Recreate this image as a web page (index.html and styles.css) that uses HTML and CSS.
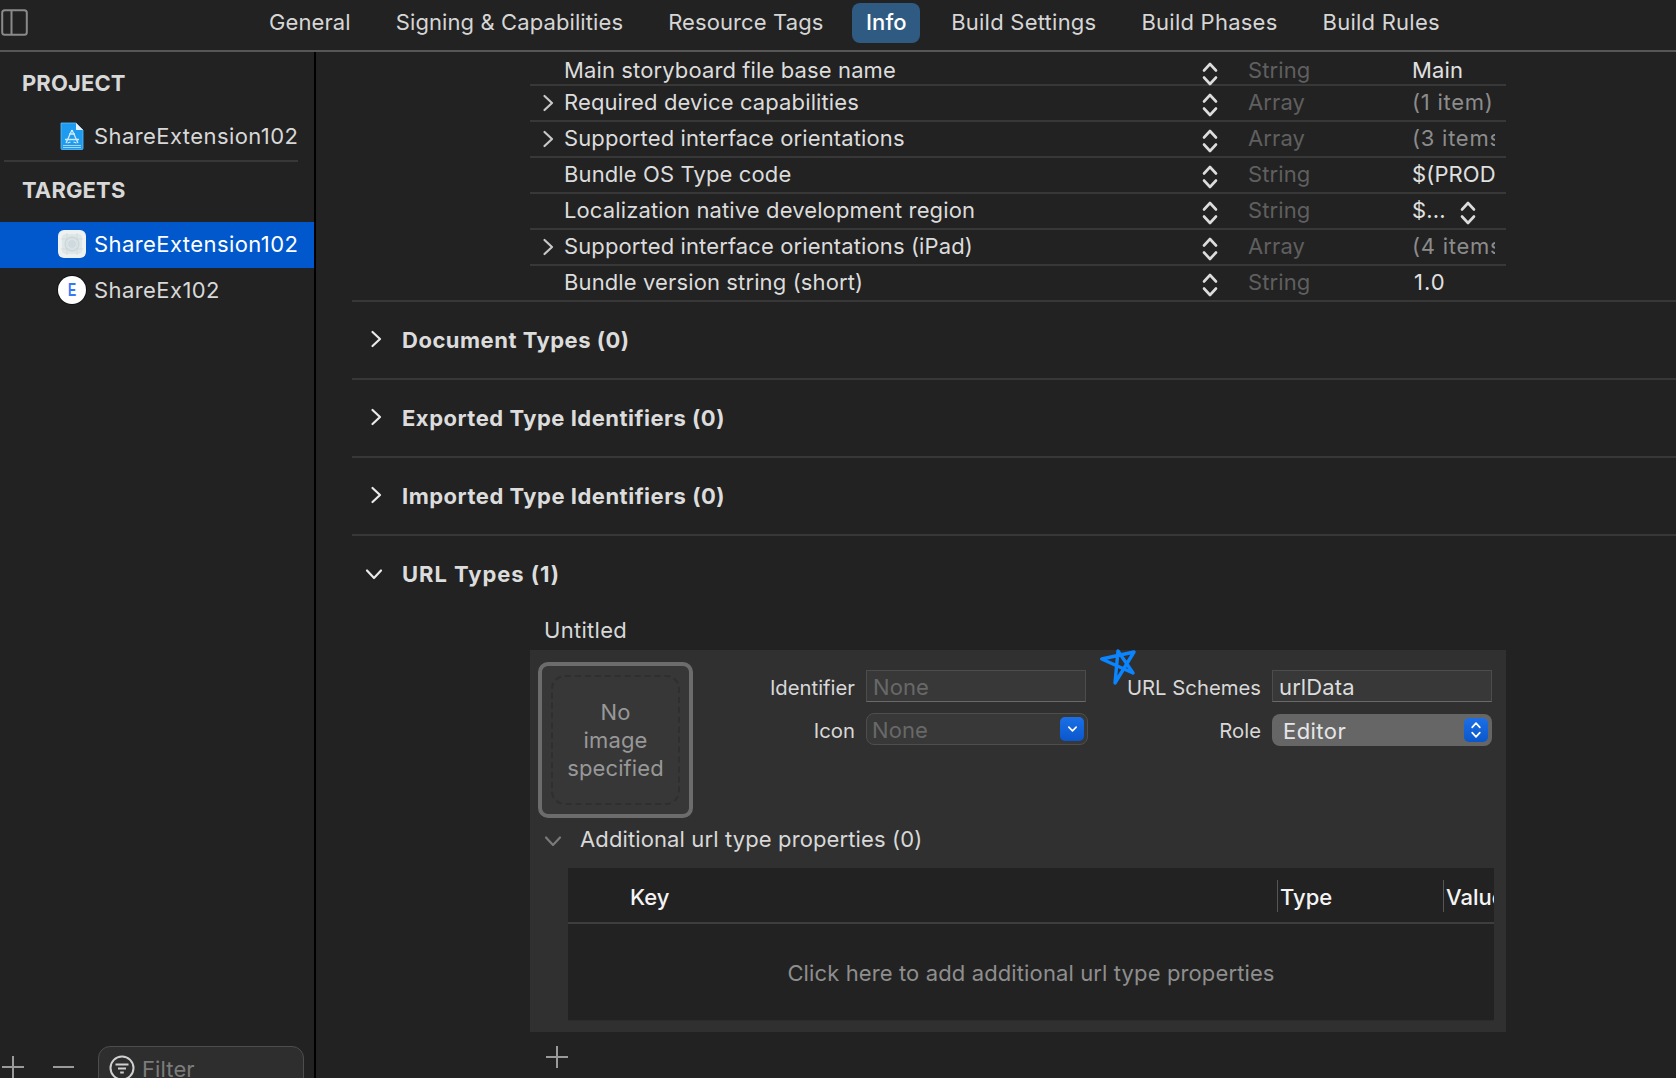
FILE: index.html
```html
<!DOCTYPE html>
<html lang="en">
<head>
<meta charset="utf-8">
<title>ShareExtension102 Info</title>
<link rel="stylesheet" href="styles.css">
</head>
<body>
<svg class="defs" width="0" height="0">
  <symbol id="stepper" viewBox="0 0 16 26"><path d="M2 9.500 8 3l6 6.500M2 16.500 8 23l6-6.500" fill="none" stroke="currentColor" stroke-width="2.600" stroke-linecap="round" stroke-linejoin="round"/></symbol>
  <symbol id="chev-r" viewBox="0 0 12 18"><path d="M2.500 2 10 9l-7.500 7" fill="none" stroke="currentColor" stroke-width="2.200" stroke-linecap="round" stroke-linejoin="round"/></symbol>
  <symbol id="chev-d" viewBox="0 0 18 12"><path d="M2 2.500 9 10l7-7.500" fill="none" stroke="currentColor" stroke-width="2.200" stroke-linecap="round" stroke-linejoin="round"/></symbol>
  <symbol id="plus" viewBox="0 0 22 22"><path d="M11 0v22M0 11h22" stroke="currentColor" stroke-width="2"/></symbol>
</svg>
<div class="app">
  <header class="topbar">
    <svg class="panel-toggle" viewBox="0 0 27 27"><rect x="1.200" y="1.200" width="24.600" height="24.600" rx="2.500" fill="none" stroke="#8a8a8a" stroke-width="2"/><path d="M10.500 1v25" stroke="#8a8a8a" stroke-width="2"/></svg>
    <nav class="tabs">
      <span class="tab">General</span>
      <span class="tab">Signing &amp; Capabilities</span>
      <span class="tab">Resource Tags</span>
      <span class="tab tab-active">Info</span>
      <span class="tab tab-wide">Build Settings</span>
      <span class="tab tab-wide">Build Phases</span>
      <span class="tab tab-wide">Build Rules</span>
    </nav>
  </header>
  <div class="body">
    <aside class="sidebar">
      <div class="side-scroll">
        <h2 class="side-head">PROJECT</h2>
        <div class="side-item side-project">
          <svg class="side-icon" viewBox="0 0 24 28"><path d="M1 1h15l7 7v18.500a1 1 0 0 1-1 1H2a1 1 0 0 1-1-1z" fill="#1d9bf0" stroke="#5cc0ff" stroke-width=".8"/><path d="M16 1l7 7h-7z" fill="#e6f3fc"/><path d="M3 23.500h18M3 25.500h18" stroke="#bfe3fa" stroke-width=".8"/><path d="M12 8l-6 13M12 8l6 13M5 17.500h14M9 12h6M7.500 21l3-1M16.500 21l-3-1" stroke="#cfeafc" stroke-width="1.300" fill="none"/></svg>
          <span>ShareExtension102</span>
        </div>
        <h2 class="side-head side-targets">TARGETS</h2>
        <div class="side-item side-selected">
          <svg class="side-icon" viewBox="0 0 28 28"><rect width="28" height="28" rx="6" fill="#eef1f2"/><rect x="4" y="4" width="20" height="20" rx="4" fill="#dfe6e8"/><circle cx="14" cy="14" r="7" fill="none" stroke="#c5d1d5"/><circle cx="14" cy="14" r="4" fill="#cfdade"/><path d="M9 3v22M19 3v22M3 9h22M3 19h22" stroke="#cbd5d9" stroke-width=".7"/></svg>
          <span>ShareExtension102</span>
        </div>
        <div class="side-item side-ext">
          <span class="ext-badge"><span class="ext-letter">E</span></span>
          <span>ShareEx102</span>
        </div>
      </div>
      <div class="side-foot">
        <svg class="foot-plus"><use href="#plus"/></svg>
        <span class="foot-minus"></span>
        <div class="filter">
          <svg class="filter-icon" viewBox="0 0 26 26"><circle cx="13" cy="13" r="11.500" fill="none" stroke="#d0d0d0" stroke-width="2"/><path d="M6.500 9.500h13M9 13.500h8M11.200 17.500h3.600" stroke="#d0d0d0" stroke-width="2"/></svg>
          <span>Filter</span>
        </div>
      </div>
    </aside>
    <main class="main">
      <div class="plist">
        <div class="row row-first"><span></span><span class="key">Main storyboard file base name</span><svg class="step"><use href="#stepper"/></svg><span class="type">String</span><span class="val">Main</span></div>
        <div class="row"><svg class="row-chev"><use href="#chev-r"/></svg><span class="key">Required device capabilities</span><svg class="step"><use href="#stepper"/></svg><span class="type">Array</span><span class="val val-dim">(1 item)</span></div>
        <div class="row"><svg class="row-chev"><use href="#chev-r"/></svg><span class="key">Supported interface orientations</span><svg class="step"><use href="#stepper"/></svg><span class="type">Array</span><span class="val val-dim">(3 items)</span></div>
        <div class="row"><span></span><span class="key">Bundle OS Type code</span><svg class="step"><use href="#stepper"/></svg><span class="type">String</span><span class="val">$(PRODUCT_BUNDLE_PACKAGE_TYPE)</span></div>
        <div class="row"><span></span><span class="key">Localization native development region</span><svg class="step"><use href="#stepper"/></svg><span class="type">String</span><span class="val val-pop"><span>$...</span><svg class="step"><use href="#stepper"/></svg></span></div>
        <div class="row"><svg class="row-chev"><use href="#chev-r"/></svg><span class="key">Supported interface orientations (iPad)</span><svg class="step"><use href="#stepper"/></svg><span class="type">Array</span><span class="val val-dim">(4 items)</span></div>
        <div class="row row-last"><span></span><span class="key">Bundle version string (short)</span><svg class="step"><use href="#stepper"/></svg><span class="type">String</span><span class="val val-num">1.0</span></div>
      </div>
      <section class="sec"><svg class="sec-chev"><use href="#chev-r"/></svg><h3>Document Types (0)</h3></section>
      <section class="sec"><svg class="sec-chev"><use href="#chev-r"/></svg><h3>Exported Type Identifiers (0)</h3></section>
      <section class="sec"><svg class="sec-chev"><use href="#chev-r"/></svg><h3>Imported Type Identifiers (0)</h3></section>
      <section class="sec sec-open"><svg class="sec-chev-d"><use href="#chev-d"/></svg><h3>URL Types (1)</h3></section>
      <div class="url">
        <div class="url-title">Untitled</div>
        <div class="url-panel">
          <svg class="star" viewBox="0 0 36 37"><path d="M.7 9 32 23 17 1 14 33 33 2Z" fill="none" stroke="#0a84ff" stroke-width="3.400" stroke-linejoin="round" stroke-linecap="round"/></svg>
          <div class="url-top">
            <div class="well"><div class="well-inner">No<br>image<br>specified</div></div>
            <div class="form">
              <label class="lab">Identifier</label>
              <div class="field field-empty">None</div>
              <label class="lab">URL Schemes</label>
              <div class="field">urlData</div>
              <label class="lab">Icon</label>
              <div class="combo"><span>None</span><span class="blue-btn blue-small"><svg viewBox="0 0 12 8"><path d="M2 2l4 4 4-4" fill="none" stroke="#fff" stroke-width="1.800" stroke-linecap="round" stroke-linejoin="round"/></svg></span></div>
              <label class="lab">Role</label>
              <div class="popup"><span>Editor</span><span class="blue-btn"><svg viewBox="0 0 16 26"><path d="M3 9.500 8 4l5 5.500M3 16.500 8 22l5-5.500" fill="none" stroke="#fff" stroke-width="2.200" stroke-linecap="round" stroke-linejoin="round"/></svg></span></div>
            </div>
          </div>
          <div class="addl">
            <svg class="addl-chev"><use href="#chev-d"/></svg>
            <span>Additional url type properties (0)</span>
          </div>
          <div class="tbl">
            <div class="tbl-head">
              <div class="th th-key">Key</div>
              <div class="th th-sep">Type</div>
              <div class="th th-sep">Value</div>
            </div>
            <div class="tbl-body">Click here to add additional url type properties</div>
          </div>
        </div>
        <svg class="url-plus"><use href="#plus"/></svg>
      </div>
    </main>
  </div>
</div>
</body>
</html>
```
FILE: styles.css
```css
* { box-sizing: border-box; }
html, body { margin: 0; height: 100%; overflow: hidden; background: #222222; }
body { font-family: Inter, "Noto Sans", "Liberation Sans", sans-serif; font-size: 22px; letter-spacing: .12px; color: #dcdcdc; }
.defs { position: absolute; }
.app { height: 1078px; display: flex; flex-direction: column; overflow: hidden; }

.topbar { height: 52px; flex: none; display: flex; align-items: flex-start; border-bottom: 2px solid #565656; }
.panel-toggle { width: 27px; height: 27px; margin: 9px 0 0 1px; flex: none; }
.tabs { display: flex; gap: 17px; margin: 3px 0 0 227px; }
.tab { height: 40px; padding: 0 14px; line-height: 38px; border-radius: 8px; color: #d6d6d6; white-space: nowrap; letter-spacing: .1px; }
.tab-wide { letter-spacing: .24px; }
.tab-active { background: #2f5b82; color: #fff; font-weight: 500; padding: 0 13.500px; margin-left: -2px; }

.body { flex: 1; display: flex; min-height: 0; }
.sidebar { width: 316px; flex: none; display: flex; flex-direction: column; border-right: 2px solid #000; }
.side-scroll { flex: 1; }
.side-head { margin: 0; padding: 18px 0 0 22px; height: 60px; font-size: 22px; line-height: 26px; font-weight: 700; color: #d8d8d8; }
.side-item { display: flex; align-items: center; gap: 8px; padding-left: 58px; color: #d8d8d8; white-space: nowrap; letter-spacing: .42px; }
.side-project { height: 50px; padding-bottom: 3px; position: relative; }
.side-project::after { content: ""; position: absolute; left: 4px; width: 294px; bottom: 0; height: 2px; background: #383838; }
.side-targets { padding-top: 15px; }
.side-selected { height: 46px; padding-bottom: 2px; background: #0058cc; color: #fff; }
.side-ext { height: 46px; padding-bottom: 2px; }
.side-icon { width: 28px; height: 28px; flex: none; }
.ext-badge { width: 28px; height: 28px; flex: none; border-radius: 50%; background: #fff; color: #3478f6; font: 700 18px/28px "Liberation Sans", sans-serif; text-align: center; box-shadow: 0 0 0 1px #111; letter-spacing: 0; }
.ext-letter { display: inline-block; transform: scaleX(.68); }

.side-foot { height: 32px; flex: none; display: flex; align-items: flex-start; position: relative; }
.foot-plus { width: 22px; height: 22px; margin: 10px 0 0 2px; color: #9a9a9a; }
.foot-minus { width: 21px; height: 2px; margin: 20px 0 0 29px; background: #9a9a9a; }
.filter { width: 206px; height: 50px; margin-left: 24px; flex: none; border: 1px solid #4d4d4d; border-radius: 12px; background: #2e2e2e; display: flex; align-items: flex-start; gap: 7px; padding: 8px 0 0 10px; color: #7c7c7c; }
.filter-icon { width: 26px; height: 26px; flex: none; }
.filter span { line-height: 26px; margin-top: 1px; }

.main { flex: 1; min-width: 0; overflow: hidden; }
.plist { margin-left: 214px; width: 976px; }
.row { display: grid; grid-template-columns: 34px 639px 45px 164px 83px; align-items: center; height: 36px; padding-bottom: 2px; border-bottom: 2px solid #383838; white-space: nowrap; }
.row-first { height: 34px; padding-bottom: 6px; }
.row-last { border-bottom: 0; padding-bottom: 4px; }
.row-chev { width: 12px; height: 18px; margin: 2px 0 0 12px; color: #c8c8c8; }
.key { color: #dcdcdc; }
.step { width: 16px; height: 26px; margin: 6px 0 0 -1px; color: #dcdcdc; }
.row-first .step { margin-top: 9px; }
.type { color: #5f5f5f; }
.val { overflow: hidden; color: #e0e0e0; }
.val-dim { color: #8c8c8c; letter-spacing: .75px; }
.val-num { padding-left: 2px; letter-spacing: 1px; }
.val-pop { display: flex; align-items: center; overflow: visible; }
.val-pop .step { margin: 6px 0 0 14px; }

.sec { margin-left: 36px; height: 78px; padding-left: 20px; display: flex; align-items: center; border-bottom: 2px solid #383838; }
.plist + .sec { box-shadow: 0 -2px 0 #383838; }
.sec h3 { margin: 0 0 0 20px; font-size: 22px; font-weight: 700; color: #dcdcdc; letter-spacing: .5px; }
.sec-chev { width: 12px; height: 18px; margin: -2px 0 0 -2px; flex: none; color: #eaeaea; }
.sec-chev-d { width: 18px; height: 12px; flex: none; color: #eaeaea; margin: 0 -1px 0 -7px; }
.sec-open { height: 76px; border-bottom: 0; }
.sec-open h3 { letter-spacing: .95px; }

.url { margin-left: 214px; width: 976px; }
.url-title { height: 38px; padding-left: 14px; line-height: 36px; color: #d8d8d8; letter-spacing: .3px; }
.url-panel { height: 382px; background: #303030; position: relative; display: flex; flex-direction: column; }
.star { position: absolute; left: 571px; top: 0; width: 36px; height: 37px; overflow: visible; }
.url-top { height: 167px; display: flex; align-items: flex-start; padding: 12px 0 0 8px; }
.well { width: 155px; height: 156px; flex: none; border: 4px solid #6c6c6c; border-radius: 10px; background: #373737; padding: 9px; }
.well-inner { height: 100%; border: 2px dashed #2f2f2f; border-radius: 14px; display: flex; align-items: center; justify-content: center; text-align: center; line-height: 28px; color: #989898; }
.form { display: grid; grid-template-columns: 173px 222px 184px 222px; grid-auto-rows: 32px; row-gap: 11px; margin-top: 8px; }
.lab { text-align: right; font-size: 20.300px; letter-spacing: 0; line-height: 35px; padding-right: 11px; color: #d8d8d8; white-space: nowrap; }
.field { width: 220px; height: 32px; background: #383838; border: 1px solid #4c4c4c; border-bottom-color: #6a6a6a; padding-left: 6px; line-height: 32px; color: #dcdcdc; }
.field-empty { color: #686868; }
.combo { width: 222px; height: 32px; background: #383838; border: 1px solid #4e4e4e; border-radius: 8px; padding: 0 3px 0 5px; display: flex; align-items: center; justify-content: space-between; color: #686868; }
.combo > span:first-child { margin-top: 2px; }
.popup { width: 220px; height: 32px; margin-top: 1px; background: #666; border-radius: 8px; padding: 0 4px 0 11px; display: flex; align-items: center; justify-content: space-between; color: #e6e6e6; letter-spacing: .45px; }
.popup > span:first-child { margin-top: 1px; }
.blue-btn { width: 24px; height: 24px; border-radius: 5px; background: linear-gradient(#1c6fe6, #0a57cc); display: flex; align-items: center; justify-content: center; flex: none; }
.blue-btn svg { width: 14px; height: 20px; }
.blue-small svg { width: 11px; height: 8px; }

.addl { height: 51px; padding: 0 0 8px 14px; display: flex; align-items: center; color: #d8d8d8; }
.addl-chev { width: 18px; height: 12px; color: #7a7a7a; margin: 4px 18px 0 0; }
.tbl { margin: 0 12px 0 38px; background: #222; }
.tbl-head { height: 56px; display: grid; grid-template-columns: 709px 166px 51px; border-bottom: 2px solid #3e3e3e; overflow: hidden; }
.th { color: #f4f4f4; font-weight: 500; line-height: 26px; padding-top: 16px; white-space: nowrap; position: relative; overflow: hidden; letter-spacing: 0; }
.th-key { padding-left: 62px; }
.th-sep { padding-left: 3px; }
.th-sep::before { content: ""; position: absolute; left: 0; top: 12px; height: 32px; width: 1px; background: #565656; }
.tbl-body { height: 97px; display: flex; align-items: center; justify-content: center; color: #8e8e8e; padding-top: 2px; border-bottom: 1px solid #2b2b2b; }
.url-plus { display: block; width: 22px; height: 22px; margin: 14px 0 0 16px; color: #9a9a9a; }
```
